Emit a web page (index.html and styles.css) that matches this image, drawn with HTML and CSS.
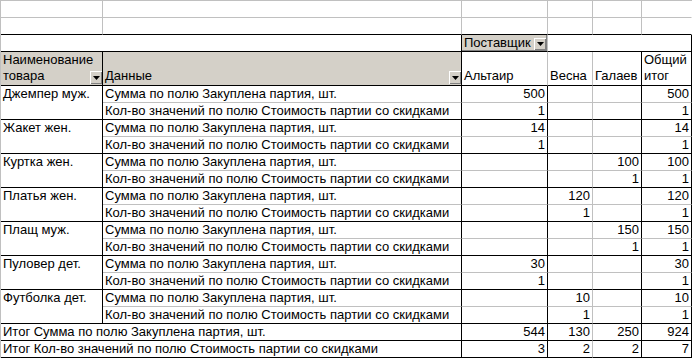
FILE: index.html
```html
<!DOCTYPE html>
<html lang="ru">
<head>
<meta charset="utf-8">
<title>Сводная таблица</title>
<link rel="stylesheet" href="styles.css">
</head>
<body>
<div class="sheet">
  <!-- row 1 -->
  <div class="c"></div><div class="c"></div><div class="c"></div><div class="c"></div><div class="c"></div><div class="c rw"></div>
  <!-- row 2 -->
  <div class="c bk"></div><div class="c bk"></div><div class="c bk"></div><div class="c bk"></div><div class="c bk"></div><div class="c bk rw"></div>
  <!-- row 3 -->
  <div class="c bk rk s2"></div>
  <div class="c bk field"><div class="fieldbox"><span class="t">Поставщик</span><span class="dd"><svg width="7" height="4" viewBox="0 0 7 4"><path d="M0 0h7L3.5 4z"/></svg></span></div></div>
  <div class="c bk rk s3"></div>
  <!-- header row -->
  <div class="c bk rk hd shade"><span class="t">Наименование</span><div class="hline"><span class="t">товара</span><span class="dd"><svg width="7" height="4" viewBox="0 0 7 4"><path d="M0 0h7L3.5 4z"/></svg></span></div></div>
  <div class="c bk rk hd shade"><div class="hline"><span class="t">Данные</span><span class="dd"><svg width="7" height="4" viewBox="0 0 7 4"><path d="M0 0h7L3.5 4z"/></svg></span></div></div>
  <div class="c bk hd"><span class="t">Альтаир</span></div>
  <div class="c bk hd"><span class="t">Весна</span></div>
  <div class="c bk rk hd"><span class="t">Галаев</span></div>
  <div class="c bk rk hd"><span class="t">Общий</span><span class="t">итог</span></div>

  <!-- Джемпер муж. -->
  <div class="c bk rk prod">Джемпер муж.</div>
  <div class="c rk">Сумма по полю Закуплена партия, шт.</div>
  <div class="c rk n">500</div><div class="c n"></div><div class="c rk n"></div><div class="c rk n">500</div>
  <div class="c bk rk">Кол-во значений по полю Стоимость партии со скидками</div>
  <div class="c bk rk n">1</div><div class="c bk n"></div><div class="c bk rk n"></div><div class="c bk rk n">1</div>

  <!-- Жакет жен. -->
  <div class="c bk rk prod">Жакет жен.</div>
  <div class="c rk">Сумма по полю Закуплена партия, шт.</div>
  <div class="c rk n">14</div><div class="c n"></div><div class="c rk n"></div><div class="c rk n">14</div>
  <div class="c bk rk">Кол-во значений по полю Стоимость партии со скидками</div>
  <div class="c bk rk n">1</div><div class="c bk n"></div><div class="c bk rk n"></div><div class="c bk rk n">1</div>

  <!-- Куртка жен. -->
  <div class="c bk rk prod">Куртка жен.</div>
  <div class="c rk">Сумма по полю Закуплена партия, шт.</div>
  <div class="c rk n"></div><div class="c n"></div><div class="c rk n">100</div><div class="c rk n">100</div>
  <div class="c bk rk">Кол-во значений по полю Стоимость партии со скидками</div>
  <div class="c bk rk n"></div><div class="c bk n"></div><div class="c bk rk n">1</div><div class="c bk rk n">1</div>

  <!-- Платья жен. -->
  <div class="c bk rk prod">Платья жен.</div>
  <div class="c rk">Сумма по полю Закуплена партия, шт.</div>
  <div class="c rk n"></div><div class="c n">120</div><div class="c rk n"></div><div class="c rk n">120</div>
  <div class="c bk rk">Кол-во значений по полю Стоимость партии со скидками</div>
  <div class="c bk rk n"></div><div class="c bk n">1</div><div class="c bk rk n"></div><div class="c bk rk n">1</div>

  <!-- Плащ муж. -->
  <div class="c bk rk prod">Плащ муж.</div>
  <div class="c rk">Сумма по полю Закуплена партия, шт.</div>
  <div class="c rk n"></div><div class="c n"></div><div class="c rk n">150</div><div class="c rk n">150</div>
  <div class="c bk rk">Кол-во значений по полю Стоимость партии со скидками</div>
  <div class="c bk rk n"></div><div class="c bk n"></div><div class="c bk rk n">1</div><div class="c bk rk n">1</div>

  <!-- Пуловер дет. -->
  <div class="c bk rk prod">Пуловер дет.</div>
  <div class="c rk">Сумма по полю Закуплена партия, шт.</div>
  <div class="c rk n">30</div><div class="c n"></div><div class="c rk n"></div><div class="c rk n">30</div>
  <div class="c bk rk">Кол-во значений по полю Стоимость партии со скидками</div>
  <div class="c bk rk n">1</div><div class="c bk n"></div><div class="c bk rk n"></div><div class="c bk rk n">1</div>

  <!-- Футболка дет. -->
  <div class="c bk rk prod">Футболка дет.</div>
  <div class="c rk">Сумма по полю Закуплена партия, шт.</div>
  <div class="c rk n"></div><div class="c n">10</div><div class="c rk n"></div><div class="c rk n">10</div>
  <div class="c bk rk">Кол-во значений по полю Стоимость партии со скидками</div>
  <div class="c bk rk n"></div><div class="c bk n">1</div><div class="c bk rk n"></div><div class="c bk rk n">1</div>

  <!-- totals -->
  <div class="c bk rk s2">Итог Сумма по полю Закуплена партия, шт.</div>
  <div class="c bk rk n">544</div><div class="c bk n">130</div><div class="c bk rk n">250</div><div class="c bk rk n">924</div>
  <div class="c bk rk s2">Итог Кол-во значений по полю Стоимость партии со скидками</div>
  <div class="c bk rk n">3</div><div class="c bk n">2</div><div class="c bk rk n">2</div><div class="c bk rk n">7</div>
</div>
</body>
</html>
```
FILE: styles.css
```css
html, body {
  margin: 0;
  padding: 0;
  background: #fff;
}

.sheet {
  display: grid;
  grid-template-columns: 102px 359px 86px 45px 49px 50px;
  grid-template-rows: 17px 17px 17px 34px repeat(16, 17px);
  width: 691px;
  border-top: 1px solid #c0c0c0;
  border-left: 1px solid #c0c0c0;
  font-family: "Liberation Sans", Arial, sans-serif;
  font-size: 13px;
  line-height: 16px;
  color: #000;
}

.c {
  box-sizing: border-box;
  border-right: 1px solid #c0c0c0;
  border-bottom: 1px solid #c0c0c0;
  padding: 0 2px;
  white-space: nowrap;
  overflow: hidden;
  min-width: 0;
}

.rk { border-right-color: #000; }
.rw { border-right-color: #fff; }
.bk { border-bottom-color: #000; }

.s2 { grid-column: span 2; }
.s3 { grid-column: span 3; }

.n { text-align: right; }

.prod { grid-row: span 2; }

.shade { background: #d4d0c8; }

.hd {
  display: flex;
  flex-direction: column;
  justify-content: flex-end;
  padding-bottom: 1px;
}

.hd .t { display: block; }

.hline {
  display: flex;
  align-items: flex-end;
  justify-content: space-between;
  margin-right: -2px;
}

.dd {
  box-sizing: border-box;
  width: 12px;
  height: 13px;
  background: #d4d0c8;
  box-shadow: inset 1px 1px #fff, inset -1px -1px #808080;
  display: flex;
  align-items: center;
  justify-content: center;
  flex: none;
}

.dd svg { display: block; }

.field { padding: 0; }

.fieldbox {
  box-sizing: border-box;
  height: 16px;
  background: #d4d0c8;
  box-shadow: inset -1px -1px #808080;
  display: flex;
  align-items: flex-end;
  justify-content: space-between;
  padding: 0 1px 1px 2px;
}

.fieldbox .dd { height: 12px; }
.fieldbox .t { line-height: 15px; }
```
